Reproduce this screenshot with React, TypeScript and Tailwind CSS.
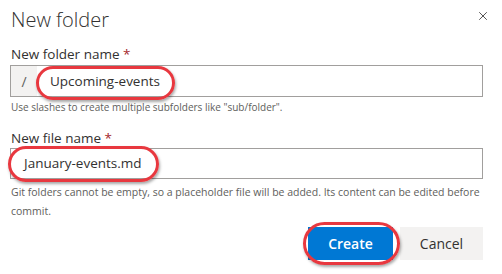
import { X } from 'lucide-react'

const font = { fontFamily: '"Open Sans", "Noto Sans", sans-serif' }

/* red annotation ring drawn over the screenshot */
function Ring({ className }: { className: string }) {
  return (
    <div
      className={`pointer-events-none absolute rounded-full border-[3px] border-[#e8383f] shadow-[1px_2px_3px_rgba(0,0,0,0.35)] ${className}`}
    />
  )
}

export default function App() {
  return (
    <div className="w-[502px] h-[274px] bg-white text-[#323130] overflow-hidden" style={font}>
      <div className="relative px-[10px] pr-[19px]">
        {/* header */}
        <div className="flex items-start justify-between pt-[5px]">
          <h1 className="pl-[1px] text-[20px] font-light leading-[30px] text-[#323130]">New folder</h1>
          <X className="mt-[4px] mr-[-7px] w-[14px] h-[14px] text-[#201f1e]" strokeWidth={1.3} />
        </div>

        {/* folder name */}
        <label className="block mt-[9px] pl-[1px] text-[13.5px] font-medium leading-[20px]">
          New folder name <span className="text-[#a4262c]">*</span>
        </label>
        <div className="relative mt-[1px] flex h-[32px] border border-[#a19f9d]">
          <div className="flex w-[26px] items-center justify-center bg-[#f3f2f1] text-[14px] text-[#605e5c]">/</div>
          <div className="flex items-center pl-[13px] text-[13.5px]">Upcoming-events</div>
          <Ring className="left-[25px] top-[0px] w-[139px] h-[34px]" />
        </div>
        <p className="mt-[3px] pl-[1px] text-[10px] leading-[14px] text-[#605e5c]">
          Use slashes to create multiple subfolders like "sub/folder".
        </p>

        {/* file name */}
        <label className="block mt-[14px] pl-[1px] text-[13.5px] font-medium leading-[20px]">
          New file name <span className="text-[#a4262c]">*</span>
        </label>
        <div className="relative flex h-[31px] items-center border border-[#a19f9d] pl-[13px] text-[13.5px]">
          January-events.md
          <Ring className="left-[-3px] top-[-3px] w-[151px] h-[36px]" />
        </div>
        <p className="mt-[4px] pl-[1px] text-[10.5px] leading-[19px] text-[#605e5c]">
          Git folders cannot be empty, so a placeholder file will be added. Its content can be edited before commit.
        </p>

        {/* footer */}
        <div className="mt-[6px] flex justify-end">
          <div className="relative">
            <button className="h-[33px] w-[85px] bg-[#0078d4] text-[14px] font-semibold text-white">Create</button>
            <Ring className="left-[-5px] top-[-5px] w-[97px] h-[43px]" />
          </div>
          <button className="ml-[7px] h-[33px] w-[83px] bg-[#f3f2f1] text-[14px] font-medium text-[#323130]">Cancel</button>
        </div>
      </div>
    </div>
  )
}
